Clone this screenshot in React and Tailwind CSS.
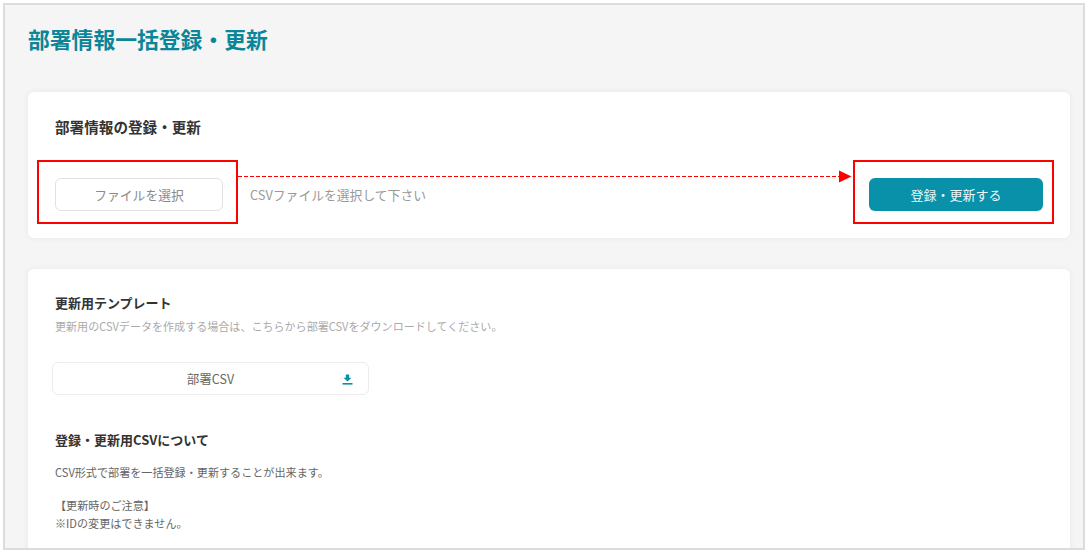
const jp = { fontFamily: '"Noto Sans CJK JP", "Noto Sans", sans-serif' };

function DownloadIcon() {
    return (
        <svg width="11" height="11" viewBox="0 0 11 11" className="text-[#0891a8]">
            <path d="M3.8 0.5h3.4v3.3h2.3L5.5 7.6 1.5 3.8h2.3z" fill="currentColor" />
            <rect x="0.5" y="9" width="10" height="1.6" fill="currentColor" />
        </svg>
    );
}

function Card({ children, className }) {
    return <section className={`rounded-md bg-white px-[27px] shadow-[0_0_6px_rgba(0,0,0,0.06)] ${className}`}>{children}</section>;
}

export default function App() {
    return (
        <div className="h-[552px] w-[1089px] overflow-hidden bg-white pl-[3px] pt-[3px]" style={jp}>
            <div className="relative h-[547px] w-[1082px] overflow-hidden border-2 border-[#dcdcdc] bg-[#f5f5f5] pl-[23px] pr-[11px]">
                <h1 className="mt-[19px] h-[30px] text-[21.8px] font-semibold leading-[30px] text-[#0b8699]">部署情報一括登録・更新</h1>

                <Card className="relative mt-[38px] h-[146px] w-[1042px]">
                    <h2 className="pt-[25px] text-[14.6px] font-bold leading-[20px] text-[#333]">部署情報の登録・更新</h2>
                    <div className="mt-[41px] flex items-center">
                        <button className="h-[33px] w-[168px] rounded-md border border-[#e2e2e2] bg-white text-[12.8px] text-[#8a8a8a]">ファイルを選択</button>
                        <span className="ml-[27px] text-[12.8px] text-[#999]">CSVファイルを選択して下さい</span>
                        <button className="ml-auto h-[33px] w-[174px] rounded-md bg-[#0891a8] text-[13px] text-[#eaf6f8]">登録・更新する</button>
                    </div>
                </Card>

                <Card className="mt-[31px] h-[300px] w-[1042px]">
                    <h2 className="pt-[24px] text-[13px] font-bold leading-[20px] text-[#333]">更新用テンプレート</h2>
                    <p className="mt-[5px] text-[11.05px] leading-[16px] text-[#aaa]">更新用のCSVデータを作成する場合は、こちらから部署CSVをダウンロードしてください。</p>
                    <button className="relative -ml-[3px] mt-[28px] flex h-[33px] w-[317px] items-center justify-center rounded-md border border-[#ececec] bg-white pt-[2px] text-[12.5px] text-[#666]">
                        部署CSV
                        <span className="absolute right-[15px] top-[11px]">
                            <DownloadIcon />
                        </span>
                    </button>
                    <h2 className="mt-[35px] text-[13px] font-bold leading-[20px] text-[#333]">登録・更新用CSVについて</h2>
                    <p className="mt-[13px] text-[11.1px] leading-[18px] text-[#666]">CSV形式で部署を一括登録・更新することが出来ます。</p>
                    <p className="mt-[15px] text-[11.1px] leading-[18px] text-[#666]">【更新時のご注意】<br />※IDの変更はできません。</p>
                </Card>

                {/* annotation layer drawn on top of the screen */}
                <div className="absolute left-[32px] top-[155px] h-[64px] w-[201px] border-2 border-[#f00]" />
                <div className="absolute left-[848px] top-[155px] h-[64px] w-[201px] border-2 border-[#f00]" />
                <svg className="absolute left-[233px] top-[165px]" width="615" height="13" viewBox="0 0 615 13">
                    <line x1="0" y1="6.5" x2="602" y2="6.5" stroke="#f00" strokeWidth="1" strokeDasharray="4 2" />
                    <path d="M601 0.5L613.5 6.5L601 12.5z" fill="#f00" />
                </svg>
            </div>
        </div>
    );
}
